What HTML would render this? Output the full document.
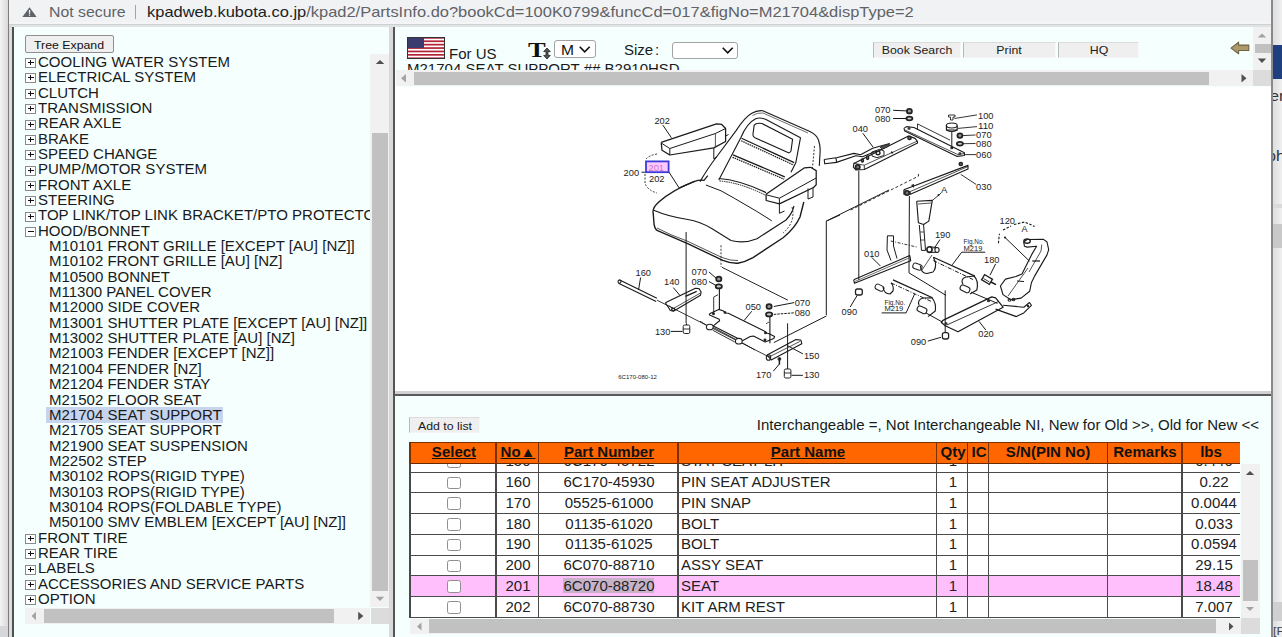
<!DOCTYPE html>
<html><head><meta charset="utf-8"><title>KPAD</title>
<style>
html,body{margin:0;padding:0;width:1282px;height:637px;overflow:hidden;background:#fff;font-family:"Liberation Sans",sans-serif;}
#root{position:relative;width:1282px;height:637px;overflow:hidden;}
#root div{position:absolute;}
.t{white-space:nowrap;transform-origin:0 0;}
</style></head><body><div id="root">
<div style="left:0px;top:0px;width:7.5px;height:626px;background:linear-gradient(90deg,#f3f3f3,#d9d9d9)"></div>
<div style="left:0px;top:626px;width:7.5px;height:11px;background:#d5d7da"></div>
<div style="left:7.5px;top:0px;width:1.5px;height:637px;background:#7d7d7d"></div>
<div style="left:9px;top:0px;width:1262px;height:23.5px;background:#f1f2f4"></div>
<div style="left:9px;top:21.5px;width:1262px;height:2px;background:#f5f5f7"></div>
<div style="left:9px;top:23.5px;width:1262px;height:1.5px;background:#cdd1d2"></div>
<div style="left:9px;top:25px;width:1262px;height:2px;background:#dfe3e3"></div>
<div style="left:9px;top:25px;width:3px;height:612px;background:#dcdcdc"></div>
<div style="left:12px;top:27px;width:2px;height:610px;background:#4d5152"></div>
<div style="left:14px;top:27px;width:375px;height:610px;background:#f4fffe"></div>
<div style="left:389px;top:27px;width:4px;height:610px;background:#d9d9d9"></div>
<div style="left:393px;top:27px;width:2px;height:610px;background:#555"></div>
<div style="left:395px;top:27px;width:876px;height:59.5px;background:#f4fffe"></div>
<div style="left:395px;top:86.5px;width:876px;height:304.5px;background:#fff"></div>
<div style="left:395px;top:391px;width:876px;height:2.6px;background:#d2d2d2"></div>
<div style="left:395px;top:393.6px;width:876px;height:2px;background:#5a5a5a"></div>
<div style="left:395px;top:395.6px;width:876px;height:241.4px;background:#f4fffe"></div>
<div style="left:1271px;top:0px;width:2px;height:637px;background:#8a8a8a"></div>
<div style="left:1273px;top:0px;width:9px;height:637px;background:linear-gradient(90deg,#dedede,#f0f0f0)"></div>
<div style="left:1273px;top:45.4px;width:9px;height:34.1px;background:#1f3f7e"></div>
<div style="left:1273px;top:204px;width:9px;height:4px;background:#dadada"></div>
<div style="left:1273px;top:224px;width:9px;height:24px;background:#c9c9c9"></div>
<div style="left:1273px;top:602px;width:9px;height:19px;background:#d0d0d0"></div>
<div style="left:1273px;top:0;width:9px;height:637px;overflow:hidden">
<div class="t" style="left:-2.8px;top:88.12px;font-size:14.98px;line-height:14.98px;font-weight:normal;color:#333;transform:scaleX(1.08);font-family:'Liberation Sans', sans-serif;">er</div>
<div class="t" style="left:-6px;top:147.82px;font-size:14.98px;line-height:14.98px;font-weight:normal;color:#333;transform:scaleX(1.08);font-family:'Liberation Sans', sans-serif;">ph</div>
<div class="t" style="left:-0.5px;top:625.03px;font-size:11.77px;line-height:11.77px;font-weight:normal;color:#444;transform:scaleX(1.08);font-family:'Liberation Sans', sans-serif;">[F</div>
</div>
<svg style="position:absolute;left:0;top:0" width="60" height="25"><path d="M29.5 7.2 L36.6 17 L22.4 17 Z" fill="#5f6368"/><rect x="28.9" y="10" width="1.3" height="3.8" fill="#f1f2f4"/><rect x="28.9" y="14.6" width="1.3" height="1.2" fill="#f1f2f4"/></svg>
<div class="t" style="left:48.7px;top:5.49px;font-size:14.66px;line-height:14.66px;font-weight:normal;color:#5f6368;transform:scaleX(1.08);font-family:'Liberation Sans', sans-serif;">Not secure</div>
<div style="left:135px;top:5px;width:1.2px;height:14px;background:#a0a3a6"></div>
<div class="t" style="left:147px;top:4.88px;font-size:14.2px;line-height:14.2px;color:#5f6368;transform:scaleX(1.16);font-family:'Liberation Sans', sans-serif"><span style="color:#202124">kpadweb.kubota.co.jp</span>/kpad2/PartsInfo.do?bookCd=100K0799&amp;funcCd=017&amp;figNo=M21704&amp;dispType=2</div>
<div style="left:24.9px;top:35.3px;width:88.8px;height:18px;box-sizing:border-box;border:1px solid #8f8f8f;border-radius:2px;background:#efefef"></div>
<div class="t" style="left:69.3px;top:39.53px;font-size:11.42px;line-height:11.42px;font-weight:normal;color:#111;transform:scaleX(1.08) translateX(-50%);font-family:'Liberation Sans', sans-serif;">Tree Expand</div>
<div style="left:14px;top:54px;width:356px;height:554px;overflow:hidden">
<div style="left:11px;top:4px;width:11px;height:9.5px;box-sizing:border-box;border:1.2px solid #8a8a8a;background:#fff"></div>
<div style="left:13.5px;top:8px;width:6px;height:1.3px;background:#111"></div>
<div style="left:15.85px;top:5.9px;width:1.3px;height:5.6px;background:#111"></div>
<div class="t" style="left:24.4px;top:1.82px;font-size:13.91px;line-height:13.91px;font-weight:normal;color:#1a1a1a;transform:scaleX(1.08);font-family:'Liberation Sans', sans-serif;">COOLING WATER SYSTEM</div>
<div style="left:11px;top:19px;width:11px;height:9.5px;box-sizing:border-box;border:1.2px solid #8a8a8a;background:#fff"></div>
<div style="left:13.5px;top:23px;width:6px;height:1.3px;background:#111"></div>
<div style="left:15.85px;top:20.9px;width:1.3px;height:5.6px;background:#111"></div>
<div class="t" style="left:24.4px;top:17.17px;font-size:13.91px;line-height:13.91px;font-weight:normal;color:#1a1a1a;transform:scaleX(1.08);font-family:'Liberation Sans', sans-serif;">ELECTRICAL SYSTEM</div>
<div style="left:11px;top:35px;width:11px;height:9.5px;box-sizing:border-box;border:1.2px solid #8a8a8a;background:#fff"></div>
<div style="left:13.5px;top:39px;width:6px;height:1.3px;background:#111"></div>
<div style="left:15.85px;top:36.9px;width:1.3px;height:5.6px;background:#111"></div>
<div class="t" style="left:24.4px;top:32.52px;font-size:13.91px;line-height:13.91px;font-weight:normal;color:#1a1a1a;transform:scaleX(1.08);font-family:'Liberation Sans', sans-serif;">CLUTCH</div>
<div style="left:11px;top:50px;width:11px;height:9.5px;box-sizing:border-box;border:1.2px solid #8a8a8a;background:#fff"></div>
<div style="left:13.5px;top:54px;width:6px;height:1.3px;background:#111"></div>
<div style="left:15.85px;top:51.9px;width:1.3px;height:5.6px;background:#111"></div>
<div class="t" style="left:24.4px;top:47.87px;font-size:13.91px;line-height:13.91px;font-weight:normal;color:#1a1a1a;transform:scaleX(1.08);font-family:'Liberation Sans', sans-serif;">TRANSMISSION</div>
<div style="left:11px;top:66px;width:11px;height:9.5px;box-sizing:border-box;border:1.2px solid #8a8a8a;background:#fff"></div>
<div style="left:13.5px;top:70px;width:6px;height:1.3px;background:#111"></div>
<div style="left:15.85px;top:67.9px;width:1.3px;height:5.6px;background:#111"></div>
<div class="t" style="left:24.4px;top:63.22px;font-size:13.91px;line-height:13.91px;font-weight:normal;color:#1a1a1a;transform:scaleX(1.08);font-family:'Liberation Sans', sans-serif;">REAR AXLE</div>
<div style="left:11px;top:81px;width:11px;height:9.5px;box-sizing:border-box;border:1.2px solid #8a8a8a;background:#fff"></div>
<div style="left:13.5px;top:85px;width:6px;height:1.3px;background:#111"></div>
<div style="left:15.85px;top:82.9px;width:1.3px;height:5.6px;background:#111"></div>
<div class="t" style="left:24.4px;top:78.57px;font-size:13.91px;line-height:13.91px;font-weight:normal;color:#1a1a1a;transform:scaleX(1.08);font-family:'Liberation Sans', sans-serif;">BRAKE</div>
<div style="left:11px;top:96px;width:11px;height:9.5px;box-sizing:border-box;border:1.2px solid #8a8a8a;background:#fff"></div>
<div style="left:13.5px;top:100px;width:6px;height:1.3px;background:#111"></div>
<div style="left:15.85px;top:97.9px;width:1.3px;height:5.6px;background:#111"></div>
<div class="t" style="left:24.4px;top:93.92px;font-size:13.91px;line-height:13.91px;font-weight:normal;color:#1a1a1a;transform:scaleX(1.08);font-family:'Liberation Sans', sans-serif;">SPEED CHANGE</div>
<div style="left:11px;top:112px;width:11px;height:9.5px;box-sizing:border-box;border:1.2px solid #8a8a8a;background:#fff"></div>
<div style="left:13.5px;top:116px;width:6px;height:1.3px;background:#111"></div>
<div style="left:15.85px;top:113.9px;width:1.3px;height:5.6px;background:#111"></div>
<div class="t" style="left:24.4px;top:109.27px;font-size:13.91px;line-height:13.91px;font-weight:normal;color:#1a1a1a;transform:scaleX(1.08);font-family:'Liberation Sans', sans-serif;">PUMP/MOTOR SYSTEM</div>
<div style="left:11px;top:127px;width:11px;height:9.5px;box-sizing:border-box;border:1.2px solid #8a8a8a;background:#fff"></div>
<div style="left:13.5px;top:131px;width:6px;height:1.3px;background:#111"></div>
<div style="left:15.85px;top:128.9px;width:1.3px;height:5.6px;background:#111"></div>
<div class="t" style="left:24.4px;top:124.62px;font-size:13.91px;line-height:13.91px;font-weight:normal;color:#1a1a1a;transform:scaleX(1.08);font-family:'Liberation Sans', sans-serif;">FRONT AXLE</div>
<div style="left:11px;top:142px;width:11px;height:9.5px;box-sizing:border-box;border:1.2px solid #8a8a8a;background:#fff"></div>
<div style="left:13.5px;top:146px;width:6px;height:1.3px;background:#111"></div>
<div style="left:15.85px;top:143.9px;width:1.3px;height:5.6px;background:#111"></div>
<div class="t" style="left:24.4px;top:139.97px;font-size:13.91px;line-height:13.91px;font-weight:normal;color:#1a1a1a;transform:scaleX(1.08);font-family:'Liberation Sans', sans-serif;">STEERING</div>
<div style="left:11px;top:158px;width:11px;height:9.5px;box-sizing:border-box;border:1.2px solid #8a8a8a;background:#fff"></div>
<div style="left:13.5px;top:162px;width:6px;height:1.3px;background:#111"></div>
<div style="left:15.85px;top:159.9px;width:1.3px;height:5.6px;background:#111"></div>
<div class="t" style="left:24.4px;top:155.32px;font-size:13.91px;line-height:13.91px;font-weight:normal;color:#1a1a1a;transform:scaleX(1.08);font-family:'Liberation Sans', sans-serif;">TOP LINK/TOP LINK BRACKET/PTO PROTECTOR</div>
<div style="left:11px;top:173px;width:11px;height:9.5px;box-sizing:border-box;border:1.2px solid #8a8a8a;background:#fff"></div>
<div style="left:13.5px;top:177px;width:6px;height:1.3px;background:#111"></div>
<div class="t" style="left:24.4px;top:170.67px;font-size:13.91px;line-height:13.91px;font-weight:normal;color:#1a1a1a;transform:scaleX(1.08);font-family:'Liberation Sans', sans-serif;">HOOD/BONNET</div>
<div class="t" style="left:34.6px;top:186.02px;font-size:13.91px;line-height:13.91px;font-weight:normal;color:#1a1a1a;transform:scaleX(1.08);font-family:'Liberation Sans', sans-serif;">M10101 FRONT GRILLE [EXCEPT [AU] [NZ]]</div>
<div class="t" style="left:34.6px;top:201.37px;font-size:13.91px;line-height:13.91px;font-weight:normal;color:#1a1a1a;transform:scaleX(1.08);font-family:'Liberation Sans', sans-serif;">M10102 FRONT GRILLE [AU] [NZ]</div>
<div class="t" style="left:34.6px;top:216.72px;font-size:13.91px;line-height:13.91px;font-weight:normal;color:#1a1a1a;transform:scaleX(1.08);font-family:'Liberation Sans', sans-serif;">M10500 BONNET</div>
<div class="t" style="left:34.6px;top:232.07px;font-size:13.91px;line-height:13.91px;font-weight:normal;color:#1a1a1a;transform:scaleX(1.08);font-family:'Liberation Sans', sans-serif;">M11300 PANEL COVER</div>
<div class="t" style="left:34.6px;top:247.42px;font-size:13.91px;line-height:13.91px;font-weight:normal;color:#1a1a1a;transform:scaleX(1.08);font-family:'Liberation Sans', sans-serif;">M12000 SIDE COVER</div>
<div class="t" style="left:34.6px;top:262.77px;font-size:13.91px;line-height:13.91px;font-weight:normal;color:#1a1a1a;transform:scaleX(1.08);font-family:'Liberation Sans', sans-serif;">M13001 SHUTTER PLATE [EXCEPT [AU] [NZ]]</div>
<div class="t" style="left:34.6px;top:278.12px;font-size:13.91px;line-height:13.91px;font-weight:normal;color:#1a1a1a;transform:scaleX(1.08);font-family:'Liberation Sans', sans-serif;">M13002 SHUTTER PLATE [AU] [NZ]</div>
<div class="t" style="left:34.6px;top:293.47px;font-size:13.91px;line-height:13.91px;font-weight:normal;color:#1a1a1a;transform:scaleX(1.08);font-family:'Liberation Sans', sans-serif;">M21003 FENDER [EXCEPT [NZ]]</div>
<div class="t" style="left:34.6px;top:308.82px;font-size:13.91px;line-height:13.91px;font-weight:normal;color:#1a1a1a;transform:scaleX(1.08);font-family:'Liberation Sans', sans-serif;">M21004 FENDER [NZ]</div>
<div class="t" style="left:34.6px;top:324.17px;font-size:13.91px;line-height:13.91px;font-weight:normal;color:#1a1a1a;transform:scaleX(1.08);font-family:'Liberation Sans', sans-serif;">M21204 FENDER STAY</div>
<div class="t" style="left:34.6px;top:339.52px;font-size:13.91px;line-height:13.91px;font-weight:normal;color:#1a1a1a;transform:scaleX(1.08);font-family:'Liberation Sans', sans-serif;">M21502 FLOOR SEAT</div>
<div style="left:31.9px;top:352.65px;width:177.4px;height:16.3px;background:#c6d4ee"></div>
<div class="t" style="left:34.6px;top:354.87px;font-size:13.91px;line-height:13.91px;font-weight:normal;color:#1a1a1a;transform:scaleX(1.08);font-family:'Liberation Sans', sans-serif;">M21704 SEAT SUPPORT</div>
<div class="t" style="left:34.6px;top:370.22px;font-size:13.91px;line-height:13.91px;font-weight:normal;color:#1a1a1a;transform:scaleX(1.08);font-family:'Liberation Sans', sans-serif;">M21705 SEAT SUPPORT</div>
<div class="t" style="left:34.6px;top:385.57px;font-size:13.91px;line-height:13.91px;font-weight:normal;color:#1a1a1a;transform:scaleX(1.08);font-family:'Liberation Sans', sans-serif;">M21900 SEAT SUSPENSION</div>
<div class="t" style="left:34.6px;top:400.92px;font-size:13.91px;line-height:13.91px;font-weight:normal;color:#1a1a1a;transform:scaleX(1.08);font-family:'Liberation Sans', sans-serif;">M22502 STEP</div>
<div class="t" style="left:34.6px;top:416.27px;font-size:13.91px;line-height:13.91px;font-weight:normal;color:#1a1a1a;transform:scaleX(1.08);font-family:'Liberation Sans', sans-serif;">M30102 ROPS(RIGID TYPE)</div>
<div class="t" style="left:34.6px;top:431.62px;font-size:13.91px;line-height:13.91px;font-weight:normal;color:#1a1a1a;transform:scaleX(1.08);font-family:'Liberation Sans', sans-serif;">M30103 ROPS(RIGID TYPE)</div>
<div class="t" style="left:34.6px;top:446.97px;font-size:13.91px;line-height:13.91px;font-weight:normal;color:#1a1a1a;transform:scaleX(1.08);font-family:'Liberation Sans', sans-serif;">M30104 ROPS(FOLDABLE TYPE)</div>
<div class="t" style="left:34.6px;top:462.32px;font-size:13.91px;line-height:13.91px;font-weight:normal;color:#1a1a1a;transform:scaleX(1.08);font-family:'Liberation Sans', sans-serif;">M50100 SMV EMBLEM [EXCEPT [AU] [NZ]]</div>
<div style="left:11px;top:480px;width:11px;height:9.5px;box-sizing:border-box;border:1.2px solid #8a8a8a;background:#fff"></div>
<div style="left:13.5px;top:484px;width:6px;height:1.3px;background:#111"></div>
<div style="left:15.85px;top:481.9px;width:1.3px;height:5.6px;background:#111"></div>
<div class="t" style="left:24.4px;top:477.67px;font-size:13.91px;line-height:13.91px;font-weight:normal;color:#1a1a1a;transform:scaleX(1.08);font-family:'Liberation Sans', sans-serif;">FRONT TIRE</div>
<div style="left:11px;top:495px;width:11px;height:9.5px;box-sizing:border-box;border:1.2px solid #8a8a8a;background:#fff"></div>
<div style="left:13.5px;top:499px;width:6px;height:1.3px;background:#111"></div>
<div style="left:15.85px;top:496.9px;width:1.3px;height:5.6px;background:#111"></div>
<div class="t" style="left:24.4px;top:493.02px;font-size:13.91px;line-height:13.91px;font-weight:normal;color:#1a1a1a;transform:scaleX(1.08);font-family:'Liberation Sans', sans-serif;">REAR TIRE</div>
<div style="left:11px;top:511px;width:11px;height:9.5px;box-sizing:border-box;border:1.2px solid #8a8a8a;background:#fff"></div>
<div style="left:13.5px;top:515px;width:6px;height:1.3px;background:#111"></div>
<div style="left:15.85px;top:512.9px;width:1.3px;height:5.6px;background:#111"></div>
<div class="t" style="left:24.4px;top:508.37px;font-size:13.91px;line-height:13.91px;font-weight:normal;color:#1a1a1a;transform:scaleX(1.08);font-family:'Liberation Sans', sans-serif;">LABELS</div>
<div style="left:11px;top:526px;width:11px;height:9.5px;box-sizing:border-box;border:1.2px solid #8a8a8a;background:#fff"></div>
<div style="left:13.5px;top:530px;width:6px;height:1.3px;background:#111"></div>
<div style="left:15.85px;top:527.9px;width:1.3px;height:5.6px;background:#111"></div>
<div class="t" style="left:24.4px;top:523.72px;font-size:13.91px;line-height:13.91px;font-weight:normal;color:#1a1a1a;transform:scaleX(1.08);font-family:'Liberation Sans', sans-serif;">ACCESSORIES AND SERVICE PARTS</div>
<div style="left:11px;top:541px;width:11px;height:9.5px;box-sizing:border-box;border:1.2px solid #8a8a8a;background:#fff"></div>
<div style="left:13.5px;top:545px;width:6px;height:1.3px;background:#111"></div>
<div style="left:15.85px;top:542.9px;width:1.3px;height:5.6px;background:#111"></div>
<div class="t" style="left:24.4px;top:539.07px;font-size:13.91px;line-height:13.91px;font-weight:normal;color:#1a1a1a;transform:scaleX(1.08);font-family:'Liberation Sans', sans-serif;">OPTION</div>
</div>
<div style="left:369.8px;top:53.6px;width:19.2px;height:553.9px;background:#f1f1f1"></div>
<div style="left:372px;top:133px;width:15.8px;height:457.5px;background:#c1c1c1"></div>
<svg style="position:absolute;left:370px;top:54px" width="19" height="554"><path d="M5.8 10 L14.3 10 L10 6 Z" fill="#505050"/><path d="M5.8 542.8 L14.3 542.8 L10 547 Z" fill="#a3a3a3"/></svg>
<div style="left:25px;top:608px;width:345px;height:16.2px;background:#f1f1f1"></div>
<div style="left:43.7px;top:609px;width:290.5px;height:14px;background:#c1c1c1"></div>
<div style="left:370.5px;top:608px;width:18.5px;height:16.2px;background:#dcdcdc"></div>
<svg style="position:absolute;left:25px;top:608px" width="345" height="16"><path d="M6.5 8 L11 3.8 L11 12.2 Z" fill="#a3a3a3"/><path d="M338.4 8 L333.2 3.8 L333.2 12.2 Z" fill="#505050"/></svg>
<svg style="position:absolute;left:407px;top:37.4px" width="38" height="22" viewBox="0 0 38 22"><rect x="0" y="0" width="38" height="22" fill="#b22234"/><rect x="0" y="1.7" width="38" height="1.7" fill="#fff"/><rect x="0" y="5.1" width="38" height="1.7" fill="#fff"/><rect x="0" y="8.5" width="38" height="1.7" fill="#fff"/><rect x="0" y="11.9" width="38" height="1.7" fill="#fff"/><rect x="0" y="15.3" width="38" height="1.7" fill="#fff"/><rect x="0" y="18.7" width="38" height="1.7" fill="#fff"/><rect x="0" y="0" width="17" height="11" fill="#3c3b6e"/><rect x="0.5" y="0.5" width="37" height="21" fill="none" stroke="#333" stroke-width="1"/></svg>
<div class="t" style="left:449px;top:47.72px;font-size:13.91px;line-height:13.91px;font-weight:normal;color:#1a1a1a;transform:scaleX(1.08);font-family:'Liberation Sans', sans-serif;">For US</div>
<div class="t" style="left:528.4px;top:40.43px;font-size:20.87px;line-height:20.87px;font-weight:bold;color:#111;transform:scaleX(1.27);font-family:'Liberation Serif', serif;">T</div>
<svg style="position:absolute;left:541px;top:47px" width="12" height="13"><path d="M6 1 L9.3 4.6 L7 4.6 L7 8.4 L9.3 8.4 L6 12 L2.7 8.4 L5 8.4 L5 4.6 L2.7 4.6 Z" fill="#555" stroke="#222" stroke-width="0.8"/></svg>
<div style="left:554.3px;top:40.4px;width:41.5px;height:18.1px;box-sizing:border-box;border:1px solid #a3a3a3;border-radius:3px;background:#fff"></div>
<div class="t" style="left:560.7px;top:43.47px;font-size:14.45px;line-height:14.45px;font-weight:normal;color:#111;transform:scaleX(1.08);font-family:'Liberation Sans', sans-serif;">M</div>
<svg style="position:absolute;left:578px;top:45px" width="14" height="9"><path d="M1.7 1.8 L6.7 6.8 L11.7 1.8" fill="none" stroke="#111" stroke-width="1.6"/></svg>
<div class="t" style="left:623.8px;top:43.52px;font-size:13.91px;line-height:13.91px;font-weight:normal;color:#1a1a1a;transform:scaleX(1.08);font-family:'Liberation Sans', sans-serif;">Size</div>
<div class="t" style="left:655.2px;top:43.52px;font-size:13.91px;line-height:13.91px;font-weight:normal;color:#1a1a1a;transform:scaleX(1.08);font-family:'Liberation Sans', sans-serif;">:</div>
<div style="left:671.9px;top:41.6px;width:66.5px;height:17.4px;box-sizing:border-box;border:1px solid #a3a3a3;border-radius:3px;background:#fff"></div>
<svg style="position:absolute;left:721px;top:46px" width="14" height="9"><path d="M1.7 1.8 L6.7 6.8 L11.7 1.8" fill="none" stroke="#111" stroke-width="1.6"/></svg>
<div style="left:873px;top:42px;width:87.7px;height:15.6px;box-sizing:border-box;background:#efefef;border-top:1px solid #dcdcdc;border-left:1.3px solid #b8b8b8;border-right:1px solid #f8f8f8;border-bottom:1px solid #f4f4f4"></div>
<div class="t" style="left:916.85px;top:45.23px;font-size:11.42px;line-height:11.42px;font-weight:normal;color:#1a1a1a;transform:scaleX(1.08) translateX(-50%);font-family:'Liberation Sans', sans-serif;">Book Search</div>
<div style="left:963px;top:42px;width:92.7px;height:15.6px;box-sizing:border-box;background:#efefef;border-top:1px solid #dcdcdc;border-left:1.3px solid #b8b8b8;border-right:1px solid #f8f8f8;border-bottom:1px solid #f4f4f4"></div>
<div class="t" style="left:1009.35px;top:45.23px;font-size:11.42px;line-height:11.42px;font-weight:normal;color:#1a1a1a;transform:scaleX(1.08) translateX(-50%);font-family:'Liberation Sans', sans-serif;">Print</div>
<div style="left:1058.4px;top:42px;width:81px;height:15.6px;box-sizing:border-box;background:#efefef;border-top:1px solid #dcdcdc;border-left:1.3px solid #b8b8b8;border-right:1px solid #f8f8f8;border-bottom:1px solid #f4f4f4"></div>
<div class="t" style="left:1098.9px;top:45.23px;font-size:11.42px;line-height:11.42px;font-weight:normal;color:#1a1a1a;transform:scaleX(1.08) translateX(-50%);font-family:'Liberation Sans', sans-serif;">HQ</div>
<svg style="position:absolute;left:1228px;top:40px" width="24" height="16"><path d="M3 8.1 L10.6 2.2 L10.6 5.1 L20.8 5.1 L20.8 10.5 L10.6 10.5 L10.6 13.7 Z" fill="#ad9a6a" stroke="#6e6244" stroke-width="1.1" stroke-linejoin="round"/></svg>
<div style="left:395px;top:27px;width:858px;height:43px;overflow:hidden">
<div class="t" style="left:12px;top:35.82px;font-size:13.91px;line-height:13.91px;font-weight:normal;color:#1a1a1a;transform:scaleX(1.08);font-family:'Liberation Sans', sans-serif;">M21704 SEAT SUPPORT ## B2910HSD</div>
</div>
<div style="left:396px;top:70px;width:857px;height:16.4px;background:#f1f1f1"></div>
<div style="left:413.7px;top:72px;width:794.9px;height:13px;background:#c1c1c1"></div>
<svg style="position:absolute;left:396px;top:70px" width="857" height="17"><path d="M5 8.2 L10 4 L10 12.4 Z" fill="#a3a3a3"/><path d="M850.5 8.2 L845.5 4 L845.5 12.4 Z" fill="#505050"/></svg>
<div style="left:1252.8px;top:27px;width:18.2px;height:43px;background:#f1f1f1"></div>
<div style="left:1255px;top:43.8px;width:15.5px;height:9px;background:#c1c1c1"></div>
<div style="left:1252.8px;top:70px;width:18.2px;height:16.4px;background:#dcdcdc"></div>
<svg style="position:absolute;left:1253px;top:27px" width="18" height="43"><path d="M4.8 10.5 L13.2 10.5 L9 6.5 Z" fill="#a3a3a3"/><path d="M4.8 31.5 L13.2 31.5 L9 36 Z" fill="#505050"/></svg>
<div style="left:409.4px;top:417px;width:70.2px;height:15.7px;box-sizing:border-box;background:#efefef;border-top:1px solid #dcdcdc;border-left:1.3px solid #b8b8b8;border-right:1px solid #f8f8f8;border-bottom:1px solid #f4f4f4"></div>
<div class="t" style="left:444.5px;top:420.53px;font-size:11.42px;line-height:11.42px;font-weight:normal;color:#1a1a1a;transform:scaleX(1.08) translateX(-50%);font-family:'Liberation Sans', sans-serif;">Add to list</div>
<div class="t" style="left:1259.4px;top:418.52px;font-size:13.91px;line-height:13.91px;font-weight:normal;color:#1a1a1a;transform:scaleX(1.08) translateX(-100%);font-family:'Liberation Sans', sans-serif;">Interchangeable =, Not Interchangeable NI, New for Old &gt;&gt;, Old for New &lt;&lt;</div>
<div style="left:409px;top:463px;width:832px;height:155.2px;overflow:hidden">
<div style="left:1px;top:-11.57px;width:829.8px;height:20.77px;background:#fff"></div>
<div style="left:37.9px;top:-7.27px;width:14.6px;height:12.6px;box-sizing:border-box;border:1.5px solid #8f8f8f;border-radius:2.5px;background:#fff"></div>
<div class="t" style="left:108.75px;top:-7.75px;font-size:13.91px;line-height:13.91px;font-weight:normal;color:#222;transform:scaleX(1.08) translateX(-50%);font-family:'Liberation Sans', sans-serif;">150</div>
<div class="t" style="left:199.55px;top:-7.75px;font-size:13.91px;line-height:13.91px;font-weight:normal;color:#222;transform:scaleX(1.08) translateX(-50%);font-family:'Liberation Sans', sans-serif;">6C170-45722</div>
<div class="t" style="left:272px;top:-7.75px;font-size:13.91px;line-height:13.91px;font-weight:normal;color:#222;transform:scaleX(1.08);font-family:'Liberation Sans', sans-serif;">STAY SEAT LH</div>
<div class="t" style="left:543.7px;top:-7.75px;font-size:13.91px;line-height:13.91px;font-weight:normal;color:#222;transform:scaleX(1.08) translateX(-50%);font-family:'Liberation Sans', sans-serif;">1</div>
<div class="t" style="left:805.4px;top:-7.75px;font-size:13.91px;line-height:13.91px;font-weight:normal;color:#222;transform:scaleX(1.08) translateX(-50%);font-family:'Liberation Sans', sans-serif;">0.440</div>
<div style="left:1px;top:9.2px;width:829.8px;height:20.77px;background:#fff"></div>
<div style="left:37.9px;top:13.5px;width:14.6px;height:12.6px;box-sizing:border-box;border:1.5px solid #8f8f8f;border-radius:2.5px;background:#fff"></div>
<div class="t" style="left:108.75px;top:13.02px;font-size:13.91px;line-height:13.91px;font-weight:normal;color:#222;transform:scaleX(1.08) translateX(-50%);font-family:'Liberation Sans', sans-serif;">160</div>
<div class="t" style="left:199.55px;top:13.02px;font-size:13.91px;line-height:13.91px;font-weight:normal;color:#222;transform:scaleX(1.08) translateX(-50%);font-family:'Liberation Sans', sans-serif;">6C170-45930</div>
<div class="t" style="left:272px;top:13.02px;font-size:13.91px;line-height:13.91px;font-weight:normal;color:#222;transform:scaleX(1.08);font-family:'Liberation Sans', sans-serif;">PIN SEAT ADJUSTER</div>
<div class="t" style="left:543.7px;top:13.02px;font-size:13.91px;line-height:13.91px;font-weight:normal;color:#222;transform:scaleX(1.08) translateX(-50%);font-family:'Liberation Sans', sans-serif;">1</div>
<div class="t" style="left:805.4px;top:13.02px;font-size:13.91px;line-height:13.91px;font-weight:normal;color:#222;transform:scaleX(1.08) translateX(-50%);font-family:'Liberation Sans', sans-serif;">0.22</div>
<div style="left:1px;top:29.97px;width:829.8px;height:20.77px;background:#fff"></div>
<div style="left:37.9px;top:34.27px;width:14.6px;height:12.6px;box-sizing:border-box;border:1.5px solid #8f8f8f;border-radius:2.5px;background:#fff"></div>
<div class="t" style="left:108.75px;top:33.79px;font-size:13.91px;line-height:13.91px;font-weight:normal;color:#222;transform:scaleX(1.08) translateX(-50%);font-family:'Liberation Sans', sans-serif;">170</div>
<div class="t" style="left:199.55px;top:33.79px;font-size:13.91px;line-height:13.91px;font-weight:normal;color:#222;transform:scaleX(1.08) translateX(-50%);font-family:'Liberation Sans', sans-serif;">05525-61000</div>
<div class="t" style="left:272px;top:33.79px;font-size:13.91px;line-height:13.91px;font-weight:normal;color:#222;transform:scaleX(1.08);font-family:'Liberation Sans', sans-serif;">PIN SNAP</div>
<div class="t" style="left:543.7px;top:33.79px;font-size:13.91px;line-height:13.91px;font-weight:normal;color:#222;transform:scaleX(1.08) translateX(-50%);font-family:'Liberation Sans', sans-serif;">1</div>
<div class="t" style="left:805.4px;top:33.79px;font-size:13.91px;line-height:13.91px;font-weight:normal;color:#222;transform:scaleX(1.08) translateX(-50%);font-family:'Liberation Sans', sans-serif;">0.0044</div>
<div style="left:1px;top:50.74px;width:829.8px;height:20.77px;background:#fff"></div>
<div style="left:37.9px;top:55.04px;width:14.6px;height:12.6px;box-sizing:border-box;border:1.5px solid #8f8f8f;border-radius:2.5px;background:#fff"></div>
<div class="t" style="left:108.75px;top:54.56px;font-size:13.91px;line-height:13.91px;font-weight:normal;color:#222;transform:scaleX(1.08) translateX(-50%);font-family:'Liberation Sans', sans-serif;">180</div>
<div class="t" style="left:199.55px;top:54.56px;font-size:13.91px;line-height:13.91px;font-weight:normal;color:#222;transform:scaleX(1.08) translateX(-50%);font-family:'Liberation Sans', sans-serif;">01135-61020</div>
<div class="t" style="left:272px;top:54.56px;font-size:13.91px;line-height:13.91px;font-weight:normal;color:#222;transform:scaleX(1.08);font-family:'Liberation Sans', sans-serif;">BOLT</div>
<div class="t" style="left:543.7px;top:54.56px;font-size:13.91px;line-height:13.91px;font-weight:normal;color:#222;transform:scaleX(1.08) translateX(-50%);font-family:'Liberation Sans', sans-serif;">1</div>
<div class="t" style="left:805.4px;top:54.56px;font-size:13.91px;line-height:13.91px;font-weight:normal;color:#222;transform:scaleX(1.08) translateX(-50%);font-family:'Liberation Sans', sans-serif;">0.033</div>
<div style="left:1px;top:71.51px;width:829.8px;height:20.77px;background:#fff"></div>
<div style="left:37.9px;top:75.81px;width:14.6px;height:12.6px;box-sizing:border-box;border:1.5px solid #8f8f8f;border-radius:2.5px;background:#fff"></div>
<div class="t" style="left:108.75px;top:75.33px;font-size:13.91px;line-height:13.91px;font-weight:normal;color:#222;transform:scaleX(1.08) translateX(-50%);font-family:'Liberation Sans', sans-serif;">190</div>
<div class="t" style="left:199.55px;top:75.33px;font-size:13.91px;line-height:13.91px;font-weight:normal;color:#222;transform:scaleX(1.08) translateX(-50%);font-family:'Liberation Sans', sans-serif;">01135-61025</div>
<div class="t" style="left:272px;top:75.33px;font-size:13.91px;line-height:13.91px;font-weight:normal;color:#222;transform:scaleX(1.08);font-family:'Liberation Sans', sans-serif;">BOLT</div>
<div class="t" style="left:543.7px;top:75.33px;font-size:13.91px;line-height:13.91px;font-weight:normal;color:#222;transform:scaleX(1.08) translateX(-50%);font-family:'Liberation Sans', sans-serif;">1</div>
<div class="t" style="left:805.4px;top:75.33px;font-size:13.91px;line-height:13.91px;font-weight:normal;color:#222;transform:scaleX(1.08) translateX(-50%);font-family:'Liberation Sans', sans-serif;">0.0594</div>
<div style="left:1px;top:92.28px;width:829.8px;height:20.77px;background:#fff"></div>
<div style="left:37.9px;top:96.58px;width:14.6px;height:12.6px;box-sizing:border-box;border:1.5px solid #8f8f8f;border-radius:2.5px;background:#fff"></div>
<div class="t" style="left:108.75px;top:96.1px;font-size:13.91px;line-height:13.91px;font-weight:normal;color:#222;transform:scaleX(1.08) translateX(-50%);font-family:'Liberation Sans', sans-serif;">200</div>
<div class="t" style="left:199.55px;top:96.1px;font-size:13.91px;line-height:13.91px;font-weight:normal;color:#222;transform:scaleX(1.08) translateX(-50%);font-family:'Liberation Sans', sans-serif;">6C070-88710</div>
<div class="t" style="left:272px;top:96.1px;font-size:13.91px;line-height:13.91px;font-weight:normal;color:#222;transform:scaleX(1.08);font-family:'Liberation Sans', sans-serif;">ASSY SEAT</div>
<div class="t" style="left:543.7px;top:96.1px;font-size:13.91px;line-height:13.91px;font-weight:normal;color:#222;transform:scaleX(1.08) translateX(-50%);font-family:'Liberation Sans', sans-serif;">1</div>
<div class="t" style="left:805.4px;top:96.1px;font-size:13.91px;line-height:13.91px;font-weight:normal;color:#222;transform:scaleX(1.08) translateX(-50%);font-family:'Liberation Sans', sans-serif;">29.15</div>
<div style="left:1px;top:113.05px;width:829.8px;height:20.77px;background:#ffbffc"></div>
<div style="left:37.9px;top:117.35px;width:14.6px;height:12.6px;box-sizing:border-box;border:1.5px solid #8f8f8f;border-radius:2.5px;background:#fff"></div>
<div class="t" style="left:108.75px;top:116.87px;font-size:13.91px;line-height:13.91px;font-weight:normal;color:#222;transform:scaleX(1.08) translateX(-50%);font-family:'Liberation Sans', sans-serif;">201</div>
<div style="left:154.3px;top:115.45px;width:90.9px;height:15px;background:#c8b2c8"></div>
<div class="t" style="left:199.55px;top:116.87px;font-size:13.91px;line-height:13.91px;font-weight:normal;color:#222;transform:scaleX(1.08) translateX(-50%);font-family:'Liberation Sans', sans-serif;">6C070-88720</div>
<div class="t" style="left:272px;top:116.87px;font-size:13.91px;line-height:13.91px;font-weight:normal;color:#222;transform:scaleX(1.08);font-family:'Liberation Sans', sans-serif;">SEAT</div>
<div class="t" style="left:543.7px;top:116.87px;font-size:13.91px;line-height:13.91px;font-weight:normal;color:#222;transform:scaleX(1.08) translateX(-50%);font-family:'Liberation Sans', sans-serif;">1</div>
<div class="t" style="left:805.4px;top:116.87px;font-size:13.91px;line-height:13.91px;font-weight:normal;color:#222;transform:scaleX(1.08) translateX(-50%);font-family:'Liberation Sans', sans-serif;">18.48</div>
<div style="left:1px;top:133.82px;width:829.8px;height:20.77px;background:#fff"></div>
<div style="left:37.9px;top:138.12px;width:14.6px;height:12.6px;box-sizing:border-box;border:1.5px solid #8f8f8f;border-radius:2.5px;background:#fff"></div>
<div class="t" style="left:108.75px;top:137.64px;font-size:13.91px;line-height:13.91px;font-weight:normal;color:#222;transform:scaleX(1.08) translateX(-50%);font-family:'Liberation Sans', sans-serif;">202</div>
<div class="t" style="left:199.55px;top:137.64px;font-size:13.91px;line-height:13.91px;font-weight:normal;color:#222;transform:scaleX(1.08) translateX(-50%);font-family:'Liberation Sans', sans-serif;">6C070-88730</div>
<div class="t" style="left:272px;top:137.64px;font-size:13.91px;line-height:13.91px;font-weight:normal;color:#222;transform:scaleX(1.08);font-family:'Liberation Sans', sans-serif;">KIT ARM REST</div>
<div class="t" style="left:543.7px;top:137.64px;font-size:13.91px;line-height:13.91px;font-weight:normal;color:#222;transform:scaleX(1.08) translateX(-50%);font-family:'Liberation Sans', sans-serif;">1</div>
<div class="t" style="left:805.4px;top:137.64px;font-size:13.91px;line-height:13.91px;font-weight:normal;color:#222;transform:scaleX(1.08) translateX(-50%);font-family:'Liberation Sans', sans-serif;">7.007</div>
<div style="left:1px;top:9px;width:829.8px;height:1.3px;background:#4a4a4a"></div>
<div style="left:1px;top:29px;width:829.8px;height:1.3px;background:#4a4a4a"></div>
<div style="left:1px;top:50px;width:829.8px;height:1.3px;background:#4a4a4a"></div>
<div style="left:1px;top:71px;width:829.8px;height:1.3px;background:#4a4a4a"></div>
<div style="left:1px;top:92px;width:829.8px;height:1.3px;background:#4a4a4a"></div>
<div style="left:1px;top:112px;width:829.8px;height:1.3px;background:#4a4a4a"></div>
<div style="left:1px;top:133px;width:829.8px;height:1.3px;background:#4a4a4a"></div>
<div style="left:1px;top:154px;width:829.8px;height:1.3px;background:#4a4a4a"></div>
<div style="left:0.4px;top:-3px;width:1.2px;height:158.5px;background:#4a4a4a"></div>
<div style="left:86.4px;top:-3px;width:1.2px;height:158.5px;background:#4a4a4a"></div>
<div style="left:128.9px;top:-3px;width:1.2px;height:158.5px;background:#4a4a4a"></div>
<div style="left:268.4px;top:-3px;width:1.2px;height:158.5px;background:#4a4a4a"></div>
<div style="left:527.2px;top:-3px;width:1.2px;height:158.5px;background:#4a4a4a"></div>
<div style="left:558px;top:-3px;width:1.2px;height:158.5px;background:#4a4a4a"></div>
<div style="left:578.8px;top:-3px;width:1.2px;height:158.5px;background:#4a4a4a"></div>
<div style="left:697.6px;top:-3px;width:1.2px;height:158.5px;background:#4a4a4a"></div>
<div style="left:772.4px;top:-3px;width:1.2px;height:158.5px;background:#4a4a4a"></div>
</div>
<div style="left:409.4px;top:441.5px;width:831px;height:22.5px;background:#ff6600;box-sizing:border-box;border-top:1.3px solid #7a3000;border-bottom:1.3px solid #6a2a00"></div>
<div style="left:409.4px;top:441.5px;width:1.2px;height:22.5px;background:#7a3000"></div>
<div style="left:495.4px;top:441.5px;width:1.2px;height:22.5px;background:#7a3000"></div>
<div style="left:537.9px;top:441.5px;width:1.2px;height:22.5px;background:#7a3000"></div>
<div style="left:677.4px;top:441.5px;width:1.2px;height:22.5px;background:#7a3000"></div>
<div style="left:936.2px;top:441.5px;width:1.2px;height:22.5px;background:#7a3000"></div>
<div style="left:967px;top:441.5px;width:1.2px;height:22.5px;background:#7a3000"></div>
<div style="left:987.8px;top:441.5px;width:1.2px;height:22.5px;background:#7a3000"></div>
<div style="left:1106.6px;top:441.5px;width:1.2px;height:22.5px;background:#7a3000"></div>
<div style="left:1181.4px;top:441.5px;width:1.2px;height:22.5px;background:#7a3000"></div>
<div class="t" style="left:453.5px;top:446.22px;font-size:13.91px;line-height:13.91px;font-weight:bold;color:#111;transform:scaleX(1.08) translateX(-50%);font-family:'Liberation Sans', sans-serif;text-decoration:underline;">Select</div>
<div class="t" style="left:517.75px;top:446.22px;font-size:13.91px;line-height:13.91px;font-weight:bold;color:#111;transform:scaleX(1.08) translateX(-50%);font-family:'Liberation Sans', sans-serif;text-decoration:underline;">No▲</div>
<div class="t" style="left:608.75px;top:446.22px;font-size:13.91px;line-height:13.91px;font-weight:bold;color:#111;transform:scaleX(1.08) translateX(-50%);font-family:'Liberation Sans', sans-serif;text-decoration:underline;">Part Number</div>
<div class="t" style="left:807.9px;top:446.22px;font-size:13.91px;line-height:13.91px;font-weight:bold;color:#111;transform:scaleX(1.08) translateX(-50%);font-family:'Liberation Sans', sans-serif;text-decoration:underline;">Part Name</div>
<div class="t" style="left:952.7px;top:446.22px;font-size:13.91px;line-height:13.91px;font-weight:bold;color:#111;transform:scaleX(1.08) translateX(-50%);font-family:'Liberation Sans', sans-serif;">Qty</div>
<div class="t" style="left:978.5px;top:446.22px;font-size:13.91px;line-height:13.91px;font-weight:bold;color:#111;transform:scaleX(1.08) translateX(-50%);font-family:'Liberation Sans', sans-serif;">IC</div>
<div class="t" style="left:1048.3px;top:446.22px;font-size:13.91px;line-height:13.91px;font-weight:bold;color:#111;transform:scaleX(1.08) translateX(-50%);font-family:'Liberation Sans', sans-serif;">S/N(PIN No)</div>
<div class="t" style="left:1145.1px;top:446.22px;font-size:13.91px;line-height:13.91px;font-weight:bold;color:#111;transform:scaleX(1.08) translateX(-50%);font-family:'Liberation Sans', sans-serif;">Remarks</div>
<div class="t" style="left:1211.4px;top:446.22px;font-size:13.91px;line-height:13.91px;font-weight:bold;color:#111;transform:scaleX(1.08) translateX(-50%);font-family:'Liberation Sans', sans-serif;">lbs</div>
<div style="left:1240.6px;top:463.7px;width:19.1px;height:154.5px;background:#f1f1f1"></div>
<div style="left:1242.5px;top:559.6px;width:15.5px;height:41px;background:#c1c1c1"></div>
<svg style="position:absolute;left:1241px;top:464px" width="19" height="154"><path d="M4.8 11 L13.2 11 L9 7 Z" fill="#505050"/><path d="M5 143 L13 143 L9 147 Z" fill="#a3a3a3"/></svg>
<div style="left:409.8px;top:618.7px;width:831.2px;height:14.9px;background:#f1f1f1"></div>
<div style="left:429px;top:619px;width:786.5px;height:14px;background:#c1c1c1"></div>
<div style="left:1241px;top:618.2px;width:18.7px;height:15.4px;background:#dcdcdc"></div>
<svg style="position:absolute;left:410px;top:618.7px" width="831" height="15"><path d="M7 7.5 L11.5 3.6 L11.5 11.4 Z" fill="#a3a3a3"/><path d="M823.5 7.5 L819 3.6 L819 11.4 Z" fill="#505050"/></svg>
<svg style="position:absolute;left:0;top:0" width="1282" height="637" font-family="Liberation Sans, sans-serif"><path d="M661.2 142.4 L716.5 123.8 L721.5 124.3 L725.6 128.5 L725.6 141.5 L713.8 147.9 L669.8 155.0 L662.0 150.2 L661.2 142.4" fill="none" stroke="#1a1a1a" stroke-width="1.25" stroke-linejoin="round"/><path d="M662.0 143.5 L669.8 148.5 L715.4 133.5 L725.6 128.5" fill="none" stroke="#1a1a1a" stroke-width="1.0" stroke-linejoin="round"/><path d="M669.8 148.5 L669.8 155.0" fill="none" stroke="#1a1a1a" stroke-width="1.0" stroke-linejoin="round"/><path d="M715.4 133.5 L715.4 146.5" fill="none" stroke="#1a1a1a" stroke-width="0.75" stroke-linejoin="round"/><path d="M713.8 147.9 L713.8 158.9 L717.0 156.5" fill="none" stroke="#1a1a1a" stroke-width="1.0" stroke-linejoin="round"/><path d="M725.6 136.0 L728.5 134.5" fill="none" stroke="#1a1a1a" stroke-width="1.0" stroke-linejoin="round"/><path d="M700 181.6 Q708 168 715.7 158 L736.1 130.6 Q745 117 751.8 113.3 Q757 110 762.8 110.7 L809.9 131.4 Q817 135 818.5 140 Q820.5 146 820.1 152 L819.3 165.9" fill="none" stroke="#1a1a1a" stroke-width="1.125" stroke-linejoin="round"/><path d="M752.5 115.5 Q757 112.5 763 113 L808 133" fill="none" stroke="#1a1a1a" stroke-width="0.625" stroke-linejoin="round"/><path d="M718.8 180 L740.8 137.7 Q747 123 755.7 118.8 Q760 117 766 119.5 L800.5 137.7 L795.8 162.8 L791 172.2" fill="none" stroke="#1a1a1a" stroke-width="1.125" stroke-linejoin="round"/><path d="M754.2 125.1 Q756 122.5 762 123.5 L792.6 139.2 L791 151 Q789.5 153.5 787.9 152.6 L755 137.7 Q752.5 136.5 753 134 Z" fill="none" stroke="#1a1a1a" stroke-width="1.125" stroke-linejoin="round"/><path d="M741.6 138.3 L794.2 162.6" fill="none" stroke="#1a1a1a" stroke-width="1.25" stroke-linejoin="round"/><path d="M741.2 140.8 L793.6 165.0" fill="none" stroke="#1a1a1a" stroke-width="1.25" stroke-dasharray="1.5 0.8" stroke-linejoin="round"/><path d="M733.0 154.8 L784.8 176.8" fill="none" stroke="#1a1a1a" stroke-width="1.25" stroke-linejoin="round"/><path d="M732.6 157.3 L784.2 179.2" fill="none" stroke="#1a1a1a" stroke-width="1.25" stroke-dasharray="1.5 0.8" stroke-linejoin="round"/><path d="M718.8 178.5 Q740 180 766 192.6" fill="none" stroke="#1a1a1a" stroke-width="1.25" stroke-linejoin="round"/><path d="M719.5 181 Q740 182.5 765 195" fill="none" stroke="#1a1a1a" stroke-width="1.0" stroke-dasharray="1.5 0.8" stroke-linejoin="round"/><path d="M814.5 146.0 L812.5 168.0" fill="none" stroke="#1a1a1a" stroke-width="0.875" stroke-dasharray="2 1.5" stroke-linejoin="round"/><path d="M766.0 194.2 L766.2 200.5 L779.4 203.9 L813.5 187.5 L816.2 184.8 L816.2 170.6 L810.5 167.3 L804.5 167.8 L766.0 194.2" fill="none" stroke="#1a1a1a" stroke-width="1.25" stroke-linejoin="round"/><path d="M766.2 194.8 L779.4 198.2 L816.2 178.0" fill="none" stroke="#1a1a1a" stroke-width="1.0" stroke-linejoin="round"/><path d="M779.4 198.2 L779.4 203.9" fill="none" stroke="#1a1a1a" stroke-width="1.0" stroke-linejoin="round"/><path d="M779.4 203.9 L779.4 213.3 L784.5 211.0" fill="none" stroke="#1a1a1a" stroke-width="1.0" stroke-linejoin="round"/><path d="M808.0 188.5 L808.0 199.0 L813.0 197.0 L813.0 187.5" fill="none" stroke="#1a1a1a" stroke-width="1.0" stroke-linejoin="round"/><path d="M679.5 187.9 L694.6 181.3 Q700 179.5 704 180.4 L707.8 175.6" fill="none" stroke="#1a1a1a" stroke-width="1.25" stroke-linejoin="round"/><path d="M694.6 181.3 Q672 190 658.8 202 Q652 208 653.2 213.3 L654.1 224.6 Q655 229 657 230.3 Q670 236 687.1 243.4 L722.9 260.4 Q730 263.5 737.9 263.2 Q745 262 753 257.6 L783.1 237.8 Q795 228 800 217 L803.8 202" fill="none" stroke="#1a1a1a" stroke-width="1.375" stroke-linejoin="round"/><path d="M653.2 210 Q668 216.5 687.7 219.5 Q700 221.5 711.7 228.5 L731 240.5 Q744 244 757 238.7 L786 220 Q792 214 794 206" fill="none" stroke="#1a1a1a" stroke-width="1.125" stroke-linejoin="round"/><path d="M705.9 185 Q722 190 734.2 198.2 L756.8 211.4 L771.8 220.8" fill="none" stroke="#1a1a1a" stroke-width="1.0" stroke-linejoin="round"/><path d="M657 228 Q670 235 687 241 L722 257.5 Q731 261 738 260.5" fill="none" stroke="#1a1a1a" stroke-width="0.75" stroke-linejoin="round"/><path d="M792 207 Q796 222 783 233" fill="none" stroke="#1a1a1a" stroke-width="0.875" stroke-dasharray="2 1.5" stroke-linejoin="round"/><path d="M686.1 232.0 L686.1 323.0" fill="none" stroke="#1a1a1a" stroke-width="1.0" stroke-linejoin="round"/><path d="M721.0 245.3 L721.0 267.0" fill="none" stroke="#1a1a1a" stroke-width="0.875" stroke-dasharray="2 1.5" stroke-linejoin="round"/><text x="654.4" y="123.5" font-size="9.2" fill="#222" textLength="15.5" lengthAdjust="spacingAndGlyphs">202</text><path d="M662.8 125.1 L671.4 137.7" fill="none" stroke="#1a1a1a" stroke-width="1.0" stroke-linejoin="round"/><text x="623.6" y="175.9" font-size="9.2" fill="#222" textLength="15.5" lengthAdjust="spacingAndGlyphs">200</text><path d="M641.5 172.2 L645.5 172.2" fill="none" stroke="#1a1a1a" stroke-width="1.0" stroke-linejoin="round"/><rect x="646" y="161.4" width="22.6" height="10.8" fill="#ffc8ff" stroke="#3b3bdb" stroke-width="1.8"/><text x="648.5" y="170.6" font-size="9.2" fill="#c87ac8" textLength="15.5" lengthAdjust="spacingAndGlyphs">201</text><text x="649.0" y="182.3" font-size="9.2" fill="#222" textLength="15.5" lengthAdjust="spacingAndGlyphs">202</text><path d="M646 159 Q649 155.5 657 154" fill="none" stroke="#1a1a1a" stroke-width="0.875" stroke-dasharray="2 1.5" stroke-linejoin="round"/><path d="M645 174 L645 183 Q647 190 657 193" fill="none" stroke="#1a1a1a" stroke-width="0.875" stroke-dasharray="2 1.5" stroke-linejoin="round"/><path d="M669.0 172.2 L679.2 188.0" fill="none" stroke="#1a1a1a" stroke-width="1.0" stroke-linejoin="round"/><path d="M619.2 279.8 L656.9 298.2" fill="none" stroke="#1a1a1a" stroke-width="1.125" stroke-linejoin="round"/><path d="M618.5 283.2 L656.2 301.6" fill="none" stroke="#1a1a1a" stroke-width="1.125" stroke-linejoin="round"/><ellipse cx="619.5" cy="281.6" rx="1.5" ry="1.6" fill="none" stroke="#222" stroke-width="1.125"/><text x="635.5" y="276.3" font-size="9.2" fill="#222" textLength="15.5" lengthAdjust="spacingAndGlyphs">160</text><path d="M640.6 277.5 L638.6 289.6" fill="none" stroke="#1a1a1a" stroke-width="1.0" stroke-linejoin="round"/><path d="M665.3 302.7 L695.4 288.2 L699.0 288.6 L701.1 292.0 L700.5 295.2 L673.4 311.2 L670.3 310.5 L668.5 307.5 L665.3 302.7" fill="none" stroke="#1a1a1a" stroke-width="1.125" stroke-linejoin="round"/><path d="M668.5 305.5 L673.4 308.5 L700.5 293.0" fill="none" stroke="#1a1a1a" stroke-width="0.75" stroke-linejoin="round"/><path d="M685.4 296.4 L696.7 291.4" fill="none" stroke="#1a1a1a" stroke-width="1.25" stroke-linejoin="round"/><ellipse cx="673.2" cy="309.3" rx="1.6" ry="1.3" fill="none" stroke="#222" stroke-width="1.25"/><text x="664.0" y="285.1" font-size="9.2" fill="#222" textLength="15.5" lengthAdjust="spacingAndGlyphs">140</text><path d="M673.3 287.6 L680.0 295.5" fill="none" stroke="#1a1a1a" stroke-width="1.0" stroke-linejoin="round"/><path d="M657.1 300.2 L769.2 357.0" fill="none" stroke="#1a1a1a" stroke-width="0.875" stroke-linejoin="round"/><path d="M686.5 323.3 L686.5 326.5" fill="none" stroke="#1a1a1a" stroke-width="1.0" stroke-linejoin="round"/><rect x="683.2" y="325" width="6.6" height="8.5" rx="1.5" fill="#fff" stroke="#222" stroke-width="1"/><path d="M683.2 329.0 L689.8 329.0" fill="none" stroke="#1a1a1a" stroke-width="0.875" stroke-linejoin="round"/><text x="654.9" y="334.5" font-size="9.2" fill="#222" textLength="15.5" lengthAdjust="spacingAndGlyphs">130</text><path d="M670.8 331.4 L682.4 331.4" fill="none" stroke="#1a1a1a" stroke-width="1.0" stroke-linejoin="round"/><text x="691.6" y="275.3" font-size="9.2" fill="#222" textLength="15.5" lengthAdjust="spacingAndGlyphs">070</text><text x="691.6" y="284.9" font-size="9.2" fill="#222" textLength="15.5" lengthAdjust="spacingAndGlyphs">080</text><path d="M709.0 272.0 L716.5 278.5" fill="none" stroke="#1a1a1a" stroke-width="1.0" stroke-linejoin="round"/><path d="M709.0 281.5 L716.0 285.5" fill="none" stroke="#1a1a1a" stroke-width="1.0" stroke-linejoin="round"/><ellipse cx="718.8" cy="279.0" rx="2.6" ry="2.4" fill="#999" stroke="#222" stroke-width="1.75"/><ellipse cx="718.8" cy="286.4" rx="3.1" ry="2.0" fill="#ccc" stroke="#222" stroke-width="1.75"/><path d="M719.4 288.4 L719.4 309.4" fill="none" stroke="#1a1a1a" stroke-width="1.125" stroke-linejoin="round"/><path d="M713.7 313.3 L713.7 297.1 L718.0 294.7" fill="none" stroke="#1a1a1a" stroke-width="0.875" stroke-linejoin="round"/><path d="M709.0 314.5 L710.6 313.3 L718.8 309.4 L723.5 311.0 L725.9 313.0 L728.3 313.3 L765.1 331.4 L766.7 333.0 L769.1 333.8 L774.6 336.5 L773.8 338.5 L765.1 342.0 L762.8 340.8 L753.4 336.1 L750.2 336.5 L742.4 340.8 L713.3 325.9 L719.6 320.8 L719.2 319.2 L710.2 315.3 L709.0 314.5" fill="none" stroke="#1a1a1a" stroke-width="1.125" stroke-linejoin="round"/><ellipse cx="713.5" cy="313.8" rx="0.9" ry="0.8" fill="#222" stroke="#222" stroke-width="1.125"/><ellipse cx="725.0" cy="312.5" rx="0.9" ry="0.8" fill="#222" stroke="#222" stroke-width="1.125"/><ellipse cx="765.5" cy="333.0" rx="0.9" ry="0.8" fill="#222" stroke="#222" stroke-width="1.125"/><ellipse cx="765.0" cy="339.8" rx="0.9" ry="0.8" fill="#222" stroke="#222" stroke-width="1.125"/><text x="745.5" y="310.4" font-size="9.2" fill="#222" textLength="15.5" lengthAdjust="spacingAndGlyphs">050</text><path d="M751.8 311.2 L744.0 320.6" fill="none" stroke="#1a1a1a" stroke-width="1.0" stroke-linejoin="round"/><ellipse cx="709.8" cy="327.0" rx="3.4" ry="2.8" fill="#fff" stroke="#222" stroke-width="1.125"/><ellipse cx="738.8" cy="341.2" rx="3.4" ry="2.8" fill="#fff" stroke="#222" stroke-width="1.125"/><path d="M713.3 327.5 L735.3 339.2" fill="none" stroke="#1a1a1a" stroke-width="0.875" stroke-linejoin="round"/><path d="M712.8 330.3 L734.8 342.0" fill="none" stroke="#1a1a1a" stroke-width="0.875" stroke-linejoin="round"/><path d="M700.0 321.2 L706.3 325.1" fill="none" stroke="#1a1a1a" stroke-width="0.875" stroke-linejoin="round"/><path d="M742.4 342.8 L755.0 350.0" fill="none" stroke="#1a1a1a" stroke-width="0.875" stroke-linejoin="round"/><ellipse cx="769.1" cy="306.5" rx="2.6" ry="2.4" fill="#999" stroke="#222" stroke-width="1.75"/><ellipse cx="769.1" cy="314.4" rx="3.1" ry="2.0" fill="#ccc" stroke="#222" stroke-width="1.75"/><path d="M769.9 316.5 L769.9 343.2" fill="none" stroke="#1a1a1a" stroke-width="1.125" stroke-linejoin="round"/><path d="M766.0 323.8 L769.0 322.0" fill="none" stroke="#1a1a1a" stroke-width="0.75" stroke-linejoin="round"/><path d="M773.8 306.5 L794.2 302.6" fill="none" stroke="#1a1a1a" stroke-width="1.0" stroke-linejoin="round"/><path d="M773.8 314.4 L794.2 312.8" fill="none" stroke="#1a1a1a" stroke-width="1.0" stroke-dasharray="2.5 1" stroke-linejoin="round"/><text x="794.7" y="306.0" font-size="9.2" fill="#222" textLength="15.5" lengthAdjust="spacingAndGlyphs">070</text><text x="794.7" y="316.1" font-size="9.2" fill="#222" textLength="15.5" lengthAdjust="spacingAndGlyphs">080</text><path d="M767.1 354.9 L771.2 360.0 L801.8 343.7 L800.8 340.0 L796.0 339.6 L767.1 354.9" fill="none" stroke="#1a1a1a" stroke-width="1.125" stroke-linejoin="round"/><path d="M769.0 357.0 L799.8 341.5" fill="none" stroke="#1a1a1a" stroke-width="0.75" stroke-linejoin="round"/><ellipse cx="768.5" cy="357.5" rx="2.2" ry="2.8" fill="none" stroke="#222" stroke-width="1.125"/><text x="803.9" y="359.0" font-size="9.2" fill="#222" textLength="15.5" lengthAdjust="spacingAndGlyphs">150</text><path d="M787.6 345.7 L802.9 353.9" fill="none" stroke="#1a1a1a" stroke-width="1.0" stroke-linejoin="round"/><path d="M787.6 323.3 L787.6 369.0" fill="none" stroke="#1a1a1a" stroke-width="1.0" stroke-linejoin="round"/><rect x="784.3" y="369" width="6.6" height="9" rx="1.5" fill="#fff" stroke="#222" stroke-width="1"/><path d="M784.3 373.0 L790.9 373.0" fill="none" stroke="#1a1a1a" stroke-width="0.875" stroke-linejoin="round"/><text x="803.9" y="378.4" font-size="9.2" fill="#222" textLength="15.5" lengthAdjust="spacingAndGlyphs">130</text><path d="M791.6 375.3 L802.9 375.3" fill="none" stroke="#1a1a1a" stroke-width="1.0" stroke-linejoin="round"/><path d="M779.4 357.5 L779.4 364.5" fill="none" stroke="#1a1a1a" stroke-width="1.5" stroke-linejoin="round"/><ellipse cx="779.4" cy="359.0" rx="1.4" ry="1.2" fill="none" stroke="#222" stroke-width="1.125"/><text x="755.9" y="378.4" font-size="9.2" fill="#222" textLength="15.5" lengthAdjust="spacingAndGlyphs">170</text><path d="M773.3 371.2 L779.4 364.0" fill="none" stroke="#1a1a1a" stroke-width="1.0" stroke-linejoin="round"/><text x="618.2" y="379.4" font-size="5.5" fill="#222" textLength="38.8" lengthAdjust="spacingAndGlyphs">6C170-080-12</text><path d="M722.0 267.3 L787.9 300.2" fill="none" stroke="#1a1a1a" stroke-width="0.9375" stroke-linejoin="round"/><path d="M826.3 315.1 L826.3 221.1 L889.0 190.0" fill="none" stroke="#1a1a1a" stroke-width="1.0" stroke-linejoin="round"/><path d="M826.4 316.0 L773.8 342.6" fill="none" stroke="#1a1a1a" stroke-width="1.0" stroke-linejoin="round"/><path d="M850.7 210.0 L918.4 176.2 L918.4 172.0" fill="none" stroke="#1a1a1a" stroke-width="0.875" stroke-dasharray="3 2" stroke-linejoin="round"/><path d="M840.0 215.0 L826.3 221.1" fill="none" stroke="#1a1a1a" stroke-width="1.0" stroke-linejoin="round"/><text x="875.0" y="113.0" font-size="9.2" fill="#222" textLength="15.5" lengthAdjust="spacingAndGlyphs">070</text><text x="875.0" y="122.4" font-size="9.2" fill="#222" textLength="15.5" lengthAdjust="spacingAndGlyphs">080</text><path d="M893.1 110.3 L906.6 110.9" fill="none" stroke="#1a1a1a" stroke-width="1.0" stroke-linejoin="round"/><path d="M893.1 118.5 L906.6 118.5" fill="none" stroke="#1a1a1a" stroke-width="1.0" stroke-linejoin="round"/><ellipse cx="909.4" cy="111.2" rx="2.5" ry="2.3" fill="#999" stroke="#222" stroke-width="1.75"/><ellipse cx="909.4" cy="118.5" rx="3.0" ry="1.9" fill="#ccc" stroke="#222" stroke-width="1.75"/><path d="M903.9 128.4 L906.6 126.6 L913.9 127.5 L964.4 152.8 L964.4 155.5 L957.2 156.4 L904.8 131.1 L903.9 128.4" fill="none" stroke="#1a1a1a" stroke-width="1.125" stroke-linejoin="round"/><path d="M905.0 130.0 L958.0 154.6 L964.4 153.5" fill="none" stroke="#1a1a1a" stroke-width="0.75" stroke-linejoin="round"/><path d="M917.5 123.9 L950.0 140.1" fill="none" stroke="#1a1a1a" stroke-width="0.875" stroke-linejoin="round"/><path d="M917.5 123.9 L917.5 130.0" fill="none" stroke="#1a1a1a" stroke-width="0.875" stroke-linejoin="round"/><ellipse cx="909.0" cy="128.5" rx="1.0" ry="0.8" fill="none" stroke="#222" stroke-width="1.125"/><ellipse cx="951.8" cy="148.0" rx="1.0" ry="0.8" fill="none" stroke="#222" stroke-width="1.125"/><ellipse cx="959.9" cy="153.5" rx="1.0" ry="0.8" fill="none" stroke="#222" stroke-width="1.125"/><path d="M948.5 115 L955 115 L955 117 L953 117 L953 120 L950.5 120 L950.5 117 L948.5 117 Z" fill="#fff" stroke="#222" stroke-width="0.9"/><ellipse cx="951.8" cy="125.5" rx="5.4" ry="2.5" fill="none" stroke="#222" stroke-width="1.125"/><path d="M946.4 125.5 L946.4 130.0 L957.2 130.0 L957.2 125.5" fill="none" stroke="#1a1a1a" stroke-width="1.125" stroke-linejoin="round"/><path d="M946.4 130 Q951.8 133 957.2 130" fill="none" stroke="#1a1a1a" stroke-width="1.125" stroke-linejoin="round"/><path d="M951.8 132.0 L951.8 148.2" fill="none" stroke="#1a1a1a" stroke-width="1.0" stroke-linejoin="round"/><ellipse cx="959.9" cy="135.6" rx="2.5" ry="2.3" fill="#999" stroke="#222" stroke-width="1.75"/><ellipse cx="959.9" cy="143.7" rx="3.0" ry="1.9" fill="#ccc" stroke="#222" stroke-width="1.75"/><text x="978.0" y="118.5" font-size="9.2" fill="#222" textLength="15.5" lengthAdjust="spacingAndGlyphs">100</text><text x="978.0" y="129.3" font-size="9.2" fill="#222" textLength="15.5" lengthAdjust="spacingAndGlyphs">110</text><text x="976.1" y="138.3" font-size="9.2" fill="#222" textLength="15.5" lengthAdjust="spacingAndGlyphs">070</text><text x="976.1" y="147.3" font-size="9.2" fill="#222" textLength="15.5" lengthAdjust="spacingAndGlyphs">080</text><text x="976.1" y="158.2" font-size="9.2" fill="#222" textLength="15.5" lengthAdjust="spacingAndGlyphs">060</text><text x="976.1" y="189.8" font-size="9.2" fill="#222" textLength="15.5" lengthAdjust="spacingAndGlyphs">030</text><path d="M954.5 118.5 L977.0 114.9" fill="none" stroke="#1a1a1a" stroke-width="0.875" stroke-linejoin="round"/><path d="M958.0 128.4 L977.0 126.6" fill="none" stroke="#1a1a1a" stroke-width="0.875" stroke-linejoin="round"/><path d="M962.6 135.6 L975.5 135.0" fill="none" stroke="#1a1a1a" stroke-width="0.875" stroke-linejoin="round"/><path d="M962.6 143.7 L975.5 143.5" fill="none" stroke="#1a1a1a" stroke-width="0.875" stroke-linejoin="round"/><path d="M964.4 154.6 L976.1 154.6" fill="none" stroke="#1a1a1a" stroke-width="0.875" stroke-linejoin="round"/><path d="M960.8 174.4 L976.1 184.4" fill="none" stroke="#1a1a1a" stroke-width="0.875" stroke-linejoin="round"/><path d="M855.8 162.4 L908.5 136.0 L915.1 138.4 L917.5 141.7 L917.5 143.0 L864.3 169.5 L855.8 169.9 L853.4 167.1 L853.9 163.3 L855.8 162.4" fill="none" stroke="#1a1a1a" stroke-width="1.125" stroke-linejoin="round"/><path d="M853.9 163.3 L864.3 165.2 L917.0 141.2" fill="none" stroke="#1a1a1a" stroke-width="0.75" stroke-linejoin="round"/><path d="M864.3 165.2 L864.3 169.5" fill="none" stroke="#1a1a1a" stroke-width="0.875" stroke-linejoin="round"/><ellipse cx="909.5" cy="137.9" rx="1.6" ry="1.6" fill="#777" stroke="#222" stroke-width="1.5"/><ellipse cx="857.7" cy="167.1" rx="2.2" ry="2.2" fill="#777" stroke="#222" stroke-width="1.625"/><path d="M891.0 152.0 L893.0 153.0" fill="none" stroke="#1a1a1a" stroke-width="1.625" stroke-linejoin="round"/><path d="M824.2 159.5 L836.0 157.7 L836.5 162.4 L824.7 163.8 L824.2 159.5" fill="none" stroke="#1a1a1a" stroke-width="1.125" stroke-linejoin="round"/><path d="M836.5 157.7 L853.9 153.4 L860.5 154.8 L872.7 148.2 L889.7 143.5" fill="none" stroke="#1a1a1a" stroke-width="1.125" stroke-linejoin="round"/><path d="M836.5 162.4 L855.8 155.8 L862.4 156.7 L876.5 151.1" fill="none" stroke="#1a1a1a" stroke-width="1.125" stroke-linejoin="round"/><path d="M871.8 152 L880 149.2 L884 151 L884 155.5 L877 157.7 L872 156 Z" fill="none" stroke="#222" stroke-width="1"/><path d="M880 147 L889.5 143.8 L888 146.5 L882 149 Z" fill="#555" stroke="#222" stroke-width="0.8"/><ellipse cx="878.0" cy="153.0" rx="2.0" ry="1.8" fill="none" stroke="#222" stroke-width="1.375"/><ellipse cx="862.4" cy="160.5" rx="1.1" ry="1.5" fill="#777" stroke="#222" stroke-width="1.375"/><ellipse cx="867.6" cy="157.7" rx="1.1" ry="1.8" fill="#777" stroke="#222" stroke-width="1.375"/><text x="852.5" y="131.8" font-size="9.2" fill="#222" textLength="15.5" lengthAdjust="spacingAndGlyphs">040</text><path d="M862.8 133.2 L873.2 147.3" fill="none" stroke="#1a1a1a" stroke-width="1.0" stroke-linejoin="round"/><path d="M903.9 189.8 L968.0 165.4 L968.0 169.0 L910.3 194.3 L903.9 194.3 L903.9 189.8" fill="none" stroke="#1a1a1a" stroke-width="1.125" stroke-linejoin="round"/><path d="M903.9 190.8 L910.3 191.5 L968.0 166.5" fill="none" stroke="#1a1a1a" stroke-width="0.75" stroke-linejoin="round"/><path d="M910.3 191.5 L910.3 194.3" fill="none" stroke="#1a1a1a" stroke-width="0.875" stroke-linejoin="round"/><ellipse cx="907.0" cy="193.0" rx="2.2" ry="2.2" fill="#777" stroke="#222" stroke-width="1.625"/><ellipse cx="960.8" cy="164.0" rx="1.6" ry="1.6" fill="#777" stroke="#222" stroke-width="1.5"/><path d="M911 185 L914 184 L914 188 Z" fill="#222"/><path d="M858.8 170.8 L858.8 279.8" fill="none" stroke="#1a1a1a" stroke-width="1.0" stroke-linejoin="round"/><path d="M909.4 196.0 L909.0 272.9 L946.0 295.4" fill="none" stroke="#1a1a1a" stroke-width="1.0" stroke-linejoin="round"/><path d="M916.7 201.2 L932.3 200.4 L928.8 221.1 L923.6 224.5 L918.4 222.8 L916.7 201.2" fill="none" stroke="#1a1a1a" stroke-width="1.125" stroke-linejoin="round"/><path d="M918.0 204.0 L931.0 203.0" fill="none" stroke="#1a1a1a" stroke-width="0.75" stroke-linejoin="round"/><path d="M919.3 225.0 L921.5 250.4 L925.5 250.4 L923.6 225.0" fill="none" stroke="#1a1a1a" stroke-width="1.0" stroke-linejoin="round"/><path d="M920.0 232.0 L924.0 232.0" fill="none" stroke="#1a1a1a" stroke-width="0.75" stroke-linejoin="round"/><path d="M920.5 240.0 L924.5 240.0" fill="none" stroke="#1a1a1a" stroke-width="0.75" stroke-linejoin="round"/><path d="M932.3 200.4 L939.0 195.0 L941.0 193.0" fill="none" stroke="#1a1a1a" stroke-width="0.875" stroke-linejoin="round"/><circle cx="938.5" cy="195" r="1" fill="#222"/><text x="941.0" y="193.4" font-size="9.2" fill="#222" textLength="6.3" lengthAdjust="spacingAndGlyphs">A</text><path d="M853.7 279.8 L909.8 255.6 L910.7 260.8 L854.5 283.3 L853.7 279.8" fill="none" stroke="#1a1a1a" stroke-width="1.125" stroke-linejoin="round"/><path d="M855.0 281.5 L909.0 258.0" fill="none" stroke="#1a1a1a" stroke-width="0.625" stroke-linejoin="round"/><path d="M887.4 235.8 L893.5 235.8 L893.5 246.0 L897.0 258.5" fill="none" stroke="#1a1a1a" stroke-width="1.0" stroke-linejoin="round"/><path d="M887.4 235.8 L887.0 250.0 L891.0 260.5" fill="none" stroke="#1a1a1a" stroke-width="1.0" stroke-linejoin="round"/><text x="864.0" y="256.5" font-size="9.2" fill="#222" textLength="15.5" lengthAdjust="spacingAndGlyphs">010</text><path d="M871.8 257.4 L880.4 266.0" fill="none" stroke="#1a1a1a" stroke-width="1.0" stroke-linejoin="round"/><path d="M890.8 241.0 L916.7 247.0" fill="none" stroke="#1a1a1a" stroke-width="0.875" stroke-dasharray="3 1.5 1 1.5" stroke-linejoin="round"/><ellipse cx="929.5" cy="249.6" rx="2.6" ry="2.8" fill="none" stroke="#222" stroke-width="1.625"/><path d="M929.5 246.8 L937.0 247.5" fill="none" stroke="#1a1a1a" stroke-width="1.0" stroke-linejoin="round"/><path d="M929.5 252.4 L937.0 252.3" fill="none" stroke="#1a1a1a" stroke-width="1.0" stroke-linejoin="round"/><ellipse cx="937.0" cy="250.0" rx="2.1" ry="2.5" fill="none" stroke="#222" stroke-width="1.125"/><text x="934.9" y="238.4" font-size="9.2" fill="#222" textLength="15.5" lengthAdjust="spacingAndGlyphs">190</text><path d="M940.0 239.5 L934.0 248.7" fill="none" stroke="#1a1a1a" stroke-width="1.0" stroke-linejoin="round"/><path d="M933.4 257.3 L974.9 276.1" fill="none" stroke="#1a1a1a" stroke-width="1.25" stroke-linejoin="round"/><path d="M933.4 260.6 L973.0 279.5" fill="none" stroke="#1a1a1a" stroke-width="1.0" stroke-dasharray="4 1.5 1 1.5" stroke-linejoin="round"/><rect x="912.7" y="263.9" width="9.4" height="5.6" rx="2.5" fill="#fff" stroke="#222" stroke-width="1" transform="rotate(20 917.4 266.7)"/><path d="M920.3 265.8 Q921 273.5 927 273.5 L933 272 Q936.5 268 935.3 262 L933.4 257.3" fill="none" stroke="#1a1a1a" stroke-width="1.125" stroke-linejoin="round"/><path d="M922 270 L932 255" fill="none" stroke="#1a1a1a" stroke-width="0.75" stroke-linejoin="round"/><rect x="960" y="286" width="10" height="5.6" rx="2.5" fill="#fff" stroke="#222" stroke-width="1.1" transform="rotate(25 965 288.8)"/><path d="M963 284 Q960 279 966 277 L974 276 Q979 281 976.8 290 L970 294" fill="none" stroke="#1a1a1a" stroke-width="1.125" stroke-linejoin="round"/><path d="M971.0 292.1 L997.5 303.4" fill="none" stroke="#1a1a1a" stroke-width="1.0" stroke-linejoin="round"/><path d="M893.0 279.9 L932.5 297.8" fill="none" stroke="#1a1a1a" stroke-width="1.25" stroke-linejoin="round"/><path d="M891.0 282.9 L931.6 301.6" fill="none" stroke="#1a1a1a" stroke-width="1.0" stroke-dasharray="4 1.5 1 1.5" stroke-linejoin="round"/><rect x="875" y="285" width="9" height="5.4" rx="2.5" fill="#fff" stroke="#222" stroke-width="1" transform="rotate(25 879.5 287.7)"/><path d="M883 287 Q884 294 890 294 L893 291 Q894 286 891 282.9" fill="none" stroke="#1a1a1a" stroke-width="1.125" stroke-linejoin="round"/><rect x="917" y="307" width="10" height="5.6" rx="2.5" fill="#fff" stroke="#222" stroke-width="1.1" transform="rotate(25 922 309.8)"/><path d="M919 305 Q917 300 923 298 L932 297.8 Q936.5 303 935.3 311 L928 316.6" fill="none" stroke="#1a1a1a" stroke-width="1.125" stroke-linejoin="round"/><path d="M925.9 312.9 L942.9 322.3" fill="none" stroke="#1a1a1a" stroke-width="1.0" stroke-linejoin="round"/><text x="963.6" y="244.1" font-size="7" fill="#222" textLength="20.7" lengthAdjust="spacingAndGlyphs">Fig.No.</text><text x="963.6" y="250.9" font-size="7" fill="#222" textLength="18.8" lengthAdjust="spacingAndGlyphs">M219</text><path d="M961.7 252.2 L985.2 252.2" fill="none" stroke="#1a1a1a" stroke-width="1.0" stroke-linejoin="round"/><path d="M961.7 252.2 L952.3 264.8" fill="none" stroke="#1a1a1a" stroke-width="1.0" stroke-linejoin="round"/><text x="884.5" y="304.6" font-size="7" fill="#222" textLength="20.7" lengthAdjust="spacingAndGlyphs">Fig.No.</text><text x="884.5" y="311.2" font-size="7" fill="#222" textLength="18.8" lengthAdjust="spacingAndGlyphs">M219</text><path d="M881.7 312.9 L906.1 312.9" fill="none" stroke="#1a1a1a" stroke-width="1.0" stroke-linejoin="round"/><path d="M906.1 312.9 L914.6 294.0" fill="none" stroke="#1a1a1a" stroke-width="1.0" stroke-linejoin="round"/><rect x="982.5" y="276.5" width="9" height="6" fill="#fff" stroke="#222" stroke-width="1.4" transform="rotate(30 987 279.5)"/><path d="M983.5 278.5 L989.5 282.0" fill="none" stroke="#1a1a1a" stroke-width="0.875" stroke-linejoin="round"/><path d="M991.0 282.0 L996.0 284.6" fill="none" stroke="#1a1a1a" stroke-width="1.5" stroke-linejoin="round"/><text x="984.0" y="263.4" font-size="9.2" fill="#222" textLength="15.5" lengthAdjust="spacingAndGlyphs">180</text><path d="M995.6 263.9 L990.0 275.2" fill="none" stroke="#1a1a1a" stroke-width="1.0" stroke-linejoin="round"/><rect x="855.5" y="289" width="6.8" height="6" rx="2" fill="#fff" stroke="#222" stroke-width="1.3"/><text x="841.6" y="315.4" font-size="9.2" fill="#222" textLength="15.5" lengthAdjust="spacingAndGlyphs">090</text><path d="M857.1 295.5 L850.2 307.0" fill="none" stroke="#1a1a1a" stroke-width="1.0" stroke-linejoin="round"/><path d="M945.2 290.4 L945.2 333.5" fill="none" stroke="#1a1a1a" stroke-width="1.0" stroke-linejoin="round"/><rect x="942.4" y="332.6" width="6.2" height="6.4" rx="2" fill="#fff" stroke="#222" stroke-width="1.3"/><text x="910.8" y="344.9" font-size="9.2" fill="#222" textLength="15.5" lengthAdjust="spacingAndGlyphs">090</text><path d="M941.0 337.3 L927.8 341.1" fill="none" stroke="#1a1a1a" stroke-width="1.0" stroke-linejoin="round"/><path d="M941.0 322.3 L945.7 326.0 L958.0 331.7 L1003.1 307.2 L995.6 297.8 L991.8 296.9 L942.9 320.4 L941.0 322.3" fill="none" stroke="#1a1a1a" stroke-width="1.25" stroke-linejoin="round"/><path d="M946.6 325.1 L998.4 301.6" fill="none" stroke="#1a1a1a" stroke-width="0.875" stroke-linejoin="round"/><ellipse cx="946.0" cy="323.5" rx="1.0" ry="0.8" fill="none" stroke="#222" stroke-width="1.125"/><ellipse cx="988.5" cy="301.0" rx="1.0" ry="0.8" fill="none" stroke="#222" stroke-width="1.125"/><path d="M995.6 309.1 L1016.3 316.6 L1023.8 312.9 L1031.4 305.3 L1029.5 302.5 L1023.8 307.2 L1003.1 305.3" fill="none" stroke="#1a1a1a" stroke-width="1.125" stroke-linejoin="round"/><circle cx="1028" cy="306" r="1.2" fill="#222"/><text x="978.3" y="337.1" font-size="9.2" fill="#222" textLength="15.5" lengthAdjust="spacingAndGlyphs">020</text><path d="M979.0 321.4 L985.8 330.0" fill="none" stroke="#1a1a1a" stroke-width="1.0" stroke-linejoin="round"/><text x="999.5" y="224.2" font-size="9.2" fill="#222" textLength="15.5" lengthAdjust="spacingAndGlyphs">120</text><text x="1021.4" y="231.9" font-size="9.2" fill="#222" textLength="6.0" lengthAdjust="spacingAndGlyphs">A</text><path d="M998.4 243.2 L999.4 233.8 M1003 230 L1011 226 M1014 224.5 L1024.7 222 L1034.6 226.4" fill="none" stroke="#1a1a1a" stroke-width="1.125" stroke-dasharray="2.5 1.5" stroke-linejoin="round"/><circle cx="1005" cy="237.5" r="1.1" fill="#222"/><path d="M1005.0 237.5 L1029.5 261.1" fill="none" stroke="#1a1a1a" stroke-width="1.0" stroke-linejoin="round"/><path d="M1024.5 246.3 L1023.7 242.0 L1027.0 239.5 L1043.5 239.4 L1047.0 242.0 L1048.7 249.7 L1047.0 254.9 L1034.9 275.6 L1031.5 282.5 L1029.7 291.2 L1021.1 298.1 L1010.7 299.8 L1003.0 294.6 L1000.4 286.0 L1005.5 279.1 L1015.9 276.5 L1022.0 273.9 L1031.5 254.9 L1036.6 246.3 L1027.1 247.1 L1024.5 246.3" fill="none" stroke="#1a1a1a" stroke-width="1.125" stroke-linejoin="round"/><path d="M1041.8 244.5 L1041.0 251.0 L1029.0 272.0" fill="none" stroke="#1a1a1a" stroke-width="0.75" stroke-linejoin="round"/><path d="M1008.0 296.0 L1028.0 268.0" fill="none" stroke="#1a1a1a" stroke-width="0.75" stroke-linejoin="round"/><path d="M1032.3 261.0 L1040.0 261.0" fill="none" stroke="#1a1a1a" stroke-width="1.25" stroke-linejoin="round"/><path d="M1017.0 281.0 L1024.0 281.5" fill="none" stroke="#1a1a1a" stroke-width="1.0" stroke-linejoin="round"/><ellipse cx="1027.1" cy="241.1" rx="3.2" ry="2.2" fill="none" stroke="#222" stroke-width="1.375"/><ellipse cx="1009.5" cy="300.0" rx="1.4" ry="1.2" fill="none" stroke="#222" stroke-width="1.125"/><ellipse cx="1013.5" cy="299.5" rx="1.4" ry="1.2" fill="none" stroke="#222" stroke-width="1.125"/></svg>
</div></body></html>
